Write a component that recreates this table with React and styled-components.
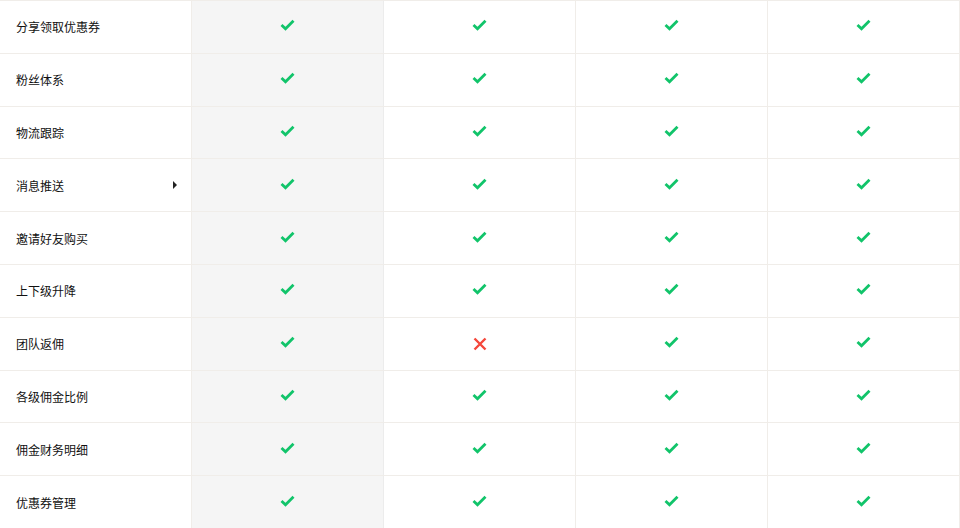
import React from "react";
import styled, { createGlobalStyle } from "styled-components";

const Global = createGlobalStyle`
  html, body { margin: 0; padding: 0; background: #fff; }
  body { font-family: "Microsoft YaHei", "Noto Sans CJK SC", "Noto Sans", sans-serif; }
  * { box-sizing: border-box; }
`;

const Table = styled.div`
  width: 960px;
  height: 528px;
  display: grid;
  grid-template-columns: repeat(5, 1fr);
  grid-template-rows: repeat(10, 1fr);
  overflow: hidden;
`;

const Cell = styled.div`
  border-top: 1px solid #f0ede9;
  border-right: 1px solid ${(p) => (p.$shaded ? "#ececec" : "#f0ede9")};
  background: ${(p) => (p.$shaded ? "#f5f5f5" : "#fff")};
  display: flex;
  align-items: center;
  justify-content: center;
`;

const LabelCell = styled(Cell)`
  justify-content: space-between;
  padding: 0 14px 0 16px;
  font-size: 12px;
  color: #111;
`;

const Caret = styled.span`
  width: 0;
  height: 0;
  border-top: 4px solid transparent;
  border-bottom: 4px solid transparent;
  border-left: 4px solid #222;
`;

const Icon = styled.svg`
  display: block;
  margin-top: ${(p) => p.$dy || 0}px;
`;

const Check = () => (
  <Icon width="15" height="12" viewBox="0 0 15 12" $dy={-3}>
    <path d="M1.5 6 L5.5 9.8 L13.5 1.8" fill="none" stroke="#11c46a" strokeWidth="2.8" strokeLinejoin="miter" />
  </Icon>
);

const Cross = () => (
  <Icon width="14" height="14" viewBox="0 0 14 14" $dy={1}>
    <path d="M1.5 1.5 L12.5 12.5 M12.5 1.5 L1.5 12.5" fill="none" stroke="#f5473b" strokeWidth="2.4" />
  </Icon>
);

const rows = [
  { label: "分享领取优惠券" },
  { label: "粉丝体系" },
  { label: "物流跟踪" },
  { label: "消息推送", caret: true },
  { label: "邀请好友购买" },
  { label: "上下级升降" },
  { label: "团队返佣", cross: [1] },
  { label: "各级佣金比例" },
  { label: "佣金财务明细" },
  { label: "优惠券管理" },
];

export default function App() {
  return (
    <>
      <Global />
      <Table>
        {rows.map((r, i) => (
          <React.Fragment key={i}>
            <LabelCell>
              <span>{r.label}</span>
              {r.caret && <Caret />}
            </LabelCell>
            {[0, 1, 2, 3].map((c) => (
              <Cell key={c} $shaded={c === 0}>
                {r.cross && r.cross.includes(c) ? <Cross /> : <Check />}
              </Cell>
            ))}
          </React.Fragment>
        ))}
      </Table>
    </>
  );
}
